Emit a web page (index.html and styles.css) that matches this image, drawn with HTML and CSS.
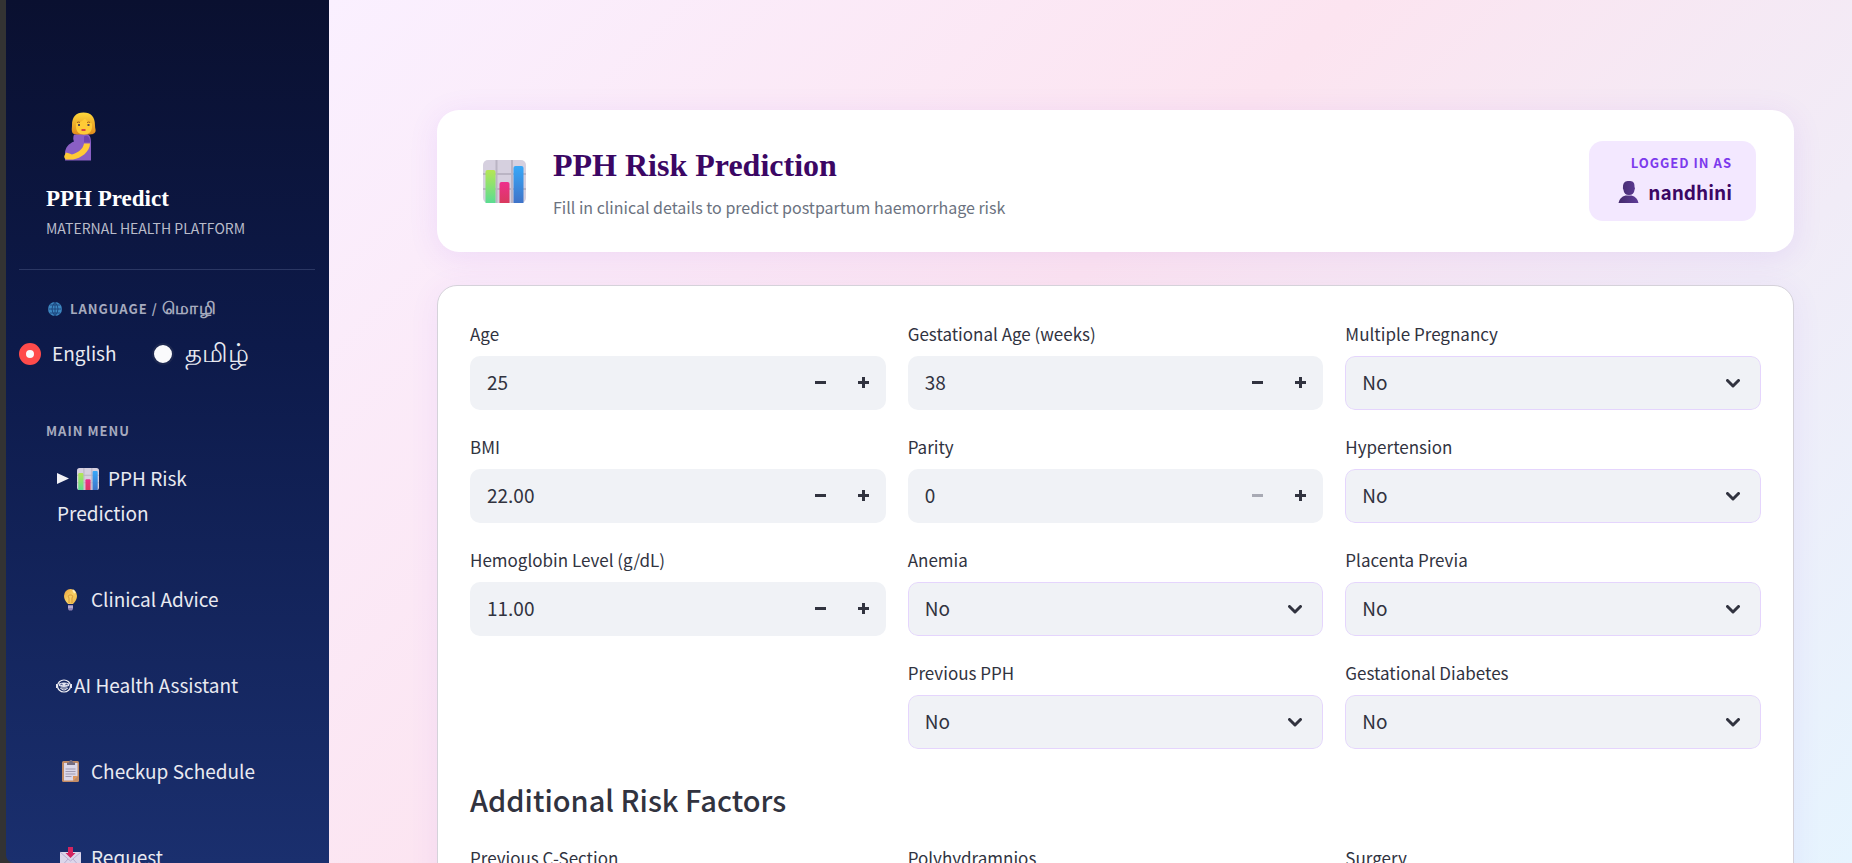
FILE: index.html
```html
<!DOCTYPE html>
<html lang="en">
<head>
<meta charset="utf-8">
<title>PPH Predict</title>
<link rel="stylesheet" href="styles.css">
</head>
<body>
<svg class="defs" width="0" height="0" aria-hidden="true">
  <defs>
    <linearGradient id="g-green" x1="0" y1="0" x2="0" y2="1"><stop offset="0" stop-color="#b5e655"/><stop offset="1" stop-color="#5bdc92"/></linearGradient>
    <linearGradient id="g-red" x1="0" y1="0" x2="0" y2="1"><stop offset="0" stop-color="#ee2f8c"/><stop offset="1" stop-color="#d93a5e"/></linearGradient>
    <linearGradient id="g-blue" x1="0" y1="0" x2="0" y2="1"><stop offset="0" stop-color="#37a8f8"/><stop offset="1" stop-color="#3f73c8"/></linearGradient>
    <linearGradient id="g-hair" x1="0" y1="0" x2="0" y2="1"><stop offset="0" stop-color="#ffd83b"/><stop offset="1" stop-color="#e08a1c"/></linearGradient>
    <linearGradient id="g-bulb" x1="0" y1="0" x2="1" y2="1"><stop offset="0" stop-color="#eda23c"/><stop offset="0.5" stop-color="#f6cf63"/><stop offset="1" stop-color="#eeb548"/></linearGradient>
    <linearGradient id="g-bust" x1="0" y1="0" x2="1" y2="0"><stop offset="0" stop-color="#432a6b"/><stop offset="1" stop-color="#5f3c98"/></linearGradient>
    <symbol id="chart" viewBox="0 0 43 43">
      <rect width="43" height="43" rx="5" fill="#d6d0df"/>
      <path d="M13.500 0v43M29 0v43M0 14h43M0 29h43" stroke="#bab4c4" stroke-width="2"/>
      <path d="M2.500 43V12q0-2 2-2h6q2 0 2 2v31z" fill="url(#g-green)"/>
      <path d="M16.500 43V24q0-2 2-2h6q2 0 2 2v19z" fill="url(#g-red)"/>
      <path d="M30.500 43V8q0-2 2-2h6q2 0 2 2v35z" fill="url(#g-blue)"/>
    </symbol>
  </defs>
</svg>
<div class="app">
  <aside class="sidebar">
    <header class="brand">
      <svg class="brand-icon" viewBox="0 0 32 48" aria-hidden="true">
        <path d="M10 22c-1 3-1 5 0 7-5 2-9 6-9 12v7h26V30c0-5-1-8-5-9z" fill="#8a5fc4"/>
        <path d="M8 13C8 4 12 0 19.500 0S31 4 31 13c0 3 1 4 .5 6-1 3-5 3-8 3h-8c-4 0-7 0-7.500-3-.5-2 0-4 0-6z" fill="url(#g-hair)"/>
        <path d="M12 11c4-1 7-3 9-5 2 3 4 4 7 5v3c0 5-3 8-8 8s-8-3-8-8z" fill="#ffcb36"/>
        <path d="M13 10q2-1 3 0M23 10q2-1 3 0" stroke="#a35c1c" stroke-width="1" fill="none"/>
        <path d="M14 12.500h2M23.500 12.500h2" stroke="#5a4a53" stroke-width="2"/>
        <path d="M17.500 17.500h4" stroke="#cc2344" stroke-width="1.600"/>
        <path d="M20 24c3-2 6 0 6 6h-6z" fill="#6f44b0"/>
        <path d="M20 31h6c0 8-9 15-17 16H2q-3-2-1-5l1-2q4 1 6 2c6-2 11-5 12-11z" fill="#ffcb36"/>
      </svg>
      <div class="brand-name">PPH Predict</div>
      <div class="brand-sub">MATERNAL HEALTH PLATFORM</div>
    </header>
    <fieldset class="language">
      <legend class="side-label">
        <svg class="globe" viewBox="0 0 14 14" aria-hidden="true"><circle cx="7" cy="7" r="7" fill="#3c86c0"/><path d="M0.500 7h13M7 0v14M2 3h10M2 11h10M7 0Q1 7 7 14M7 0q6 7 0 14" stroke="#163a72" stroke-width=".8" fill="none"/></svg>
        <span>LANGUAGE / <span class="tamil-small">மொழி</span></span>
      </legend>
      <div class="radios">
        <label class="radio"><input type="radio" name="lang" checked><span>English</span></label>
        <label class="radio"><input type="radio" name="lang"><span class="tamil">தமிழ்</span></label>
      </div>
    </fieldset>
    <div class="side-label menu-label">MAIN MENU</div>
    <nav class="menu">
      <button class="item" type="button"><svg class="arrow" viewBox="0 0 12 11" aria-hidden="true"><path d="M0 0l12 5.500L0 11z" fill="#f1f1f6"/></svg><svg class="chart-small" aria-hidden="true"><use href="#chart"/></svg>PPH Risk Prediction</button>
      <button class="item" type="button"><svg class="emoji" viewBox="0 0 28 24" aria-hidden="true"><path d="M11 16q-4-4-4-8a6.500 7 0 0 1 13 0q0 4-4 8z" fill="url(#g-bulb)"/><path d="M12 15v-5q-2-3 1.500-3t1.500 3v5" fill="none" stroke="#d99a38" stroke-width="1"/><path d="M16 2l2 3" stroke="#fff0bd" stroke-width="2"/><path d="M11 17h5v4l-1 1.500h-3l-1-1.500z" fill="#8e82b5"/><path d="M11 19h5" stroke="#d8d0e6"/></svg>Clinical Advice</button>
      <button class="item" type="button"><svg class="robot" viewBox="0 0 16 14" aria-hidden="true"><ellipse cx="8" cy="7" rx="6.500" ry="6" fill="none" stroke="#f1f1f6" stroke-width="1.200"/><path d="M.8 5v4M15.200 5v4" stroke="#f1f1f6" stroke-width="1.500"/><path d="M3 4.500q5-2 10 0V7q-5 2-10 0z" fill="#e2e4ef"/><path d="M4.500 6.200l1-1.400 1 1.400M9.500 6.200l1-1.400 1 1.400" stroke="#17296a" stroke-width=".9" fill="none"/><path d="M4.500 9h7q-1 2-3.500 2T4.500 9z" fill="none" stroke="#f1f1f6" stroke-width="1"/></svg>AI Health Assistant</button>
      <button class="item" type="button"><svg class="emoji" viewBox="0 0 28 24" aria-hidden="true"><rect x="5" y="1" width="17" height="21" rx="1.500" fill="#c28b64"/><path d="M7 3h13.500v13L16 20.500H7z" fill="#dcd8ea"/><path d="M20.500 16L16 20.500V16z" fill="#e0965c"/><path d="M10 5V2.500h2L13 0h2l1 2.500h2V5z" fill="#746c80"/><path d="M8.500 9h10M8.500 11.500h10M8.500 14h10M8.500 16.500h6" stroke="#a09ab2"/></svg>Checkup Schedule</button>
      <button class="item" type="button"><svg class="emoji" viewBox="0 0 28 24" aria-hidden="true"><path d="M3 6h21v17H3z" fill="#dcd6ea"/><path d="M3 6l10.500 9L24 6M3 22l8-9M24 22l-8-9" stroke="#b8afd0" fill="none"/><path d="M11 1h5v6h2.500l-5 5-5-5H11z" fill="#d3245f"/></svg>Request Appointment</button>
    </nav>
  </aside>
  <main class="main">
    <section class="hero">
      <svg class="hero-icon" aria-hidden="true"><use href="#chart"/></svg>
      <div class="hero-text">
        <h1>PPH Risk Prediction</h1>
        <p>Fill in clinical details to predict postpartum haemorrhage risk</p>
      </div>
      <div class="user">
        <div class="user-label">LOGGED IN AS</div>
        <div class="user-name"><svg viewBox="0 0 20 22" aria-hidden="true"><path d="M4.500 5C5 1 7 0 10.500 0S16 1 16 5v1q1 1 0 3-.5 5-5.500 5T5 9q-1-2-.5-3zM0 22q1-6 7-7.500h6Q19 16 20 22z" fill="url(#g-bust)"/></svg><span>nandhini</span></div>
      </div>
    </section>
    <form class="form">
      <div class="columns">
        <div class="column">
          <div class="field"><label for="age">Age</label><div class="number"><input id="age" value="25" inputmode="numeric"><button type="button" aria-label="Decrease">
            <svg viewBox="0 0 11 11"><path d="M0 5.500h11"/></svg></button><button type="button" aria-label="Increase"><svg viewBox="0 0 11 11"><path d="M0 5.500h11M5.500 0v11"/></svg></button></div></div>
          <div class="field"><label for="bmi">BMI</label><div class="number"><input id="bmi" value="22.00" inputmode="decimal"><button type="button" aria-label="Decrease">
            <svg viewBox="0 0 11 11"><path d="M0 5.500h11"/></svg></button><button type="button" aria-label="Increase"><svg viewBox="0 0 11 11"><path d="M0 5.500h11M5.500 0v11"/></svg></button></div></div>
          <div class="field"><label for="hb">Hemoglobin Level (g/dL)</label><div class="number"><input id="hb" value="11.00" inputmode="decimal"><button type="button" aria-label="Decrease">
            <svg viewBox="0 0 11 11"><path d="M0 5.500h11"/></svg></button><button type="button" aria-label="Increase"><svg viewBox="0 0 11 11"><path d="M0 5.500h11M5.500 0v11"/></svg></button></div></div>
        </div>
        <div class="column">
          <div class="field"><label for="ga">Gestational Age (weeks)</label><div class="number"><input id="ga" value="38" inputmode="numeric"><button type="button" aria-label="Decrease">
            <svg viewBox="0 0 11 11"><path d="M0 5.500h11"/></svg></button><button type="button" aria-label="Increase"><svg viewBox="0 0 11 11"><path d="M0 5.500h11M5.500 0v11"/></svg></button></div></div>
          <div class="field"><label for="parity">Parity</label><div class="number"><input id="parity" value="0" inputmode="numeric"><button type="button" aria-label="Decrease" disabled>
            <svg viewBox="0 0 11 11"><path d="M0 5.500h11"/></svg></button><button type="button" aria-label="Increase"><svg viewBox="0 0 11 11"><path d="M0 5.500h11M5.500 0v11"/></svg></button></div></div>
          <div class="field"><label for="anemia">Anemia</label><div class="select"><select id="anemia"><option>No</option><option>Yes</option></select><svg viewBox="0 0 14 9"><path d="M1.500 1.500L7 7l5.500-5.500"/></svg></div></div>
          <div class="field"><label for="pph">Previous PPH</label><div class="select"><select id="pph"><option>No</option><option>Yes</option></select><svg viewBox="0 0 14 9"><path d="M1.500 1.500L7 7l5.500-5.500"/></svg></div></div>
        </div>
        <div class="column">
          <div class="field"><label for="multi">Multiple Pregnancy</label><div class="select"><select id="multi"><option>No</option><option>Yes</option></select><svg viewBox="0 0 14 9"><path d="M1.500 1.500L7 7l5.500-5.500"/></svg></div></div>
          <div class="field"><label for="hyper">Hypertension</label><div class="select"><select id="hyper"><option>No</option><option>Yes</option></select><svg viewBox="0 0 14 9"><path d="M1.500 1.500L7 7l5.500-5.500"/></svg></div></div>
          <div class="field"><label for="previa">Placenta Previa</label><div class="select"><select id="previa"><option>No</option><option>Yes</option></select><svg viewBox="0 0 14 9"><path d="M1.500 1.500L7 7l5.500-5.500"/></svg></div></div>
          <div class="field"><label for="gd">Gestational Diabetes</label><div class="select"><select id="gd"><option>No</option><option>Yes</option></select><svg viewBox="0 0 14 9"><path d="M1.500 1.500L7 7l5.500-5.500"/></svg></div></div>
        </div>
      </div>
      <h2>Additional Risk Factors</h2>
      <div class="columns">
        <div class="field column"><label for="cs">Previous C-Section</label><div class="select"><select id="cs"><option>No</option></select></div></div>
        <div class="field column"><label for="poly">Polyhydramnios</label><div class="select"><select id="poly"><option>No</option></select></div></div>
        <div class="field column"><label for="surg">Surgery</label><div class="select"><select id="surg"><option>No</option></select></div></div>
      </div>
    </form>
  </main>
</div>
</body>
</html>
```
FILE: styles.css
```css
* { box-sizing: border-box; }
body {
  margin: 0;
  background: #333;
  color: #31333f;
  font-family: "Noto Sans CJK SC", "Noto Sans", sans-serif;
  font-size: 19px;
}
button, input, select { font: inherit; color: inherit; }
.defs { position: absolute; }
.app { display: flex; height: 100vh; padding-left: 6px; overflow: hidden; }

.sidebar {
  flex: 0 0 323px;
  padding: 112px 14px 0 13px;
  overflow: hidden;
  border-bottom-left-radius: 8px;
  background: linear-gradient(180deg, #0a1030 0%, #0d1a4a 40%, #1a2f6e 100%);
  color: #e9eaf1;
}
.brand { padding: 0 27px 30px; border-bottom: 1px solid #2b3763; }
.brand-icon { display: block; width: 32px; height: 49px; margin-left: 18px; }
.brand-name { margin-top: 22px; font: bold 23px/32px "Liberation Serif", serif; color: #fff; }
.brand-sub { margin-top: 2px; font-size: 14px; line-height: 22px; color: #b9bcca; }
.language { margin: 0; padding: 0; border: 0; }
.side-label { display: flex; align-items: center; gap: 8px; padding: 27px 27px 0 29px; font-size: 13px; font-weight: 700; line-height: 24px; letter-spacing: 1px; color: #a6aabe; }
.tamil-small { font-size: 17px; line-height: 20px; }
.globe { width: 14px; height: 14px; }
.radios { display: flex; gap: 35px; margin-top: 17px; }
.radio { display: flex; align-items: center; gap: 11px; height: 32px; line-height: 32px; }
.radio span { padding-bottom: 2px; }
.radio .tamil { padding-bottom: 6px; font-size: 26px; }
.radio input { appearance: none; width: 22px; height: 22px; margin: 0; border: 2px solid #1c2750; border-radius: 50%; background: #fafafc; }
.radio input:checked { border: 7px solid #ff4b4b; }
.menu-label { padding: 49px 27px 0; }
.menu { display: flex; flex-direction: column; gap: 51px; margin-top: 17px; padding: 0 49px 0 38px; }
.item { padding: 0; border: 0; background: none; text-align: left; line-height: 35px; }
.item svg { display: inline-block; vertical-align: middle; margin-top: -4px; }
.arrow { width: 12px; height: 11px; margin-right: 8px; }
.chart-small { width: 22px; height: 22px; margin-right: 9px; }
.emoji { width: 28px; height: 24px; margin-right: 6px; }
.item .robot { width: 16px; height: 14px; margin: -4px 2px 0 -1px; }

.main {
  flex: 1;
  min-width: 0;
  padding: 110px 58px 0 108px;
  overflow: hidden;
  background: linear-gradient(135deg, #faf0ff 0%, #fce4f0 43%, #e6f4fe 100%);
}
.hero {
  display: flex;
  align-items: center;
  min-height: 142px;
  padding: 0 38px 0 46px;
  border-radius: 22px;
  background: #fff;
  box-shadow: 0 5px 30px rgba(124, 58, 237, .1);
}
.hero-icon { width: 43px; height: 43px; margin-right: 27px; }
.hero-text { flex: 1; }
h1 { margin: 0; font: bold 32px/48px "Liberation Serif", serif; color: #3b0764; }
.hero-text p { margin: 4px 0 0; font-size: 16px; line-height: 28px; color: #6b7280; }
.user { width: 167px; padding: 10px 24px 12px; border-radius: 14px; background: #f3e8ff; text-align: right; }
.user-label { font-size: 13px; line-height: 24px; font-weight: 700; letter-spacing: 1px; color: #7c3aed; }
.user-name { display: flex; align-items: center; justify-content: flex-end; gap: 9px; line-height: 34px; font-weight: 700; color: #3b0764; }
.user-name svg { width: 21px; height: 22px; }

.form {
  min-height: 640px;
  margin-top: 33px;
  padding: 35px 32px;
  border: 1px solid #d5d2da;
  border-radius: 20px;
  background: #fff;
  box-shadow: 0 5px 30px rgba(124, 58, 237, .08);
}
.columns { display: flex; gap: 22px; }
.column { flex: 1; min-width: 0; display: flex; flex-direction: column; }
.column > .field + .field { margin-top: 24px; }
.field > label { display: block; padding-bottom: 10px; font-size: 17px; line-height: 25px; }
.number, .select { position: relative; display: flex; height: 54px; border-radius: 10px; background: #f0f2f6; overflow: hidden; }
.number input { flex: 1; min-width: 0; padding: 0 17px 3px; border: 0; background: none; }
.number button { display: flex; align-items: center; justify-content: center; width: 43px; padding: 0 0 1px; border: 0; background: none; }
.number button:last-child { margin-right: 1px; }
.number svg { width: 11px; height: 11px; stroke: #31333f; stroke-width: 3; }
.number button:disabled svg { stroke: #a8aab4; }
.select select { width: 100%; padding: 0 16px 3px; border: 1px solid #e5d5fd; border-radius: 10px; appearance: none; background: none; }
.select svg { position: absolute; right: 21px; top: 23px; width: 14px; height: 9px; fill: none; stroke: #31333f; stroke-width: 3; stroke-linecap: round; stroke-linejoin: round; pointer-events: none; }
h2 { margin: 25px 0 21px; font-size: 29px; line-height: 50px; font-weight: 500; }
```
